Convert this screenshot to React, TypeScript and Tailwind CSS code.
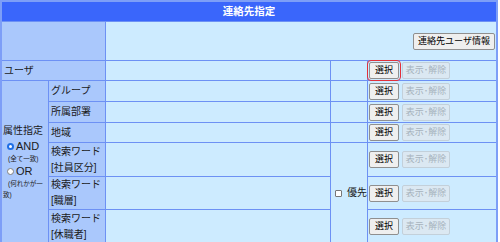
import React from "react";

const btn =
  "h-[17px] flex items-center justify-center rounded-[2px] border border-[#8f8f8f] bg-[#efefef] text-[9px] leading-none text-black";
const dis =
  "h-[17px] w-[48px] flex items-center justify-center rounded-[2px] border border-[#c3d0da] bg-[#dbe8f2] text-[9px] leading-none text-[#a7b3bd]";

function Buttons({ focus }: { focus?: boolean }) {
  return (
    <div className="bg-[#cdebff] flex items-center gap-[3px] pl-[1px]">
      <button
        className={
          btn +
          " w-[30px]" +
          (focus ? " outline-1 outline-solid outline-[#e3303a] outline-offset-[1px]" : "")
        }
      >
        選択
      </button>
      <button className={dis} disabled>
        表示･解除
      </button>
    </div>
  );
}

const L = "bg-[#aac8fc] flex items-center pl-[2px] text-[10px] leading-[16px] text-[#1a1a1a]";
const R = "bg-[#cdebff]";

export default function App() {
  return (
    <div className="w-[500px] h-[242px] overflow-hidden bg-white font-['Liberation_Sans','Noto_Sans_CJK_JP',sans-serif]">
      <div
        className="w-[498px] border-2 border-[#7d9ef7] bg-[#6d91f4] grid gap-px"
        style={{
          gridTemplateColumns: "46px 56px 224px 36px 1fr",
          gridTemplateRows: "19px 38px 19px 20px 20px 19px 33px 32px 33px",
        }}
      >
        {/* header */}
        <div className="col-span-5 bg-[#3a66fb] flex items-center justify-center text-white font-bold text-[10.5px] leading-none">
          連絡先指定
        </div>

        {/* row 1 */}
        <div className="col-span-2 bg-[#aac8fc]" />
        <div className="col-span-3 bg-[#cdebff] flex items-center justify-end pr-[1px]">
          <button className={btn + " w-[82px] px-0"}>連絡先ユーザ情報</button>
        </div>

        {/* user */}
        <div className={"col-span-2 " + L}>ユーザ</div>
        <div className={R} />
        <div className={R} />
        <Buttons focus />

        {/* attribute cell */}
        <div className="row-span-6 bg-[#aac8fc] flex flex-col justify-center pl-[1px] text-[#1a1a1a]">
          <div className="h-[14px] flex items-center text-[10px] leading-none">属性指定</div>
          <div className="h-[16px] flex items-center">
            <span className="ml-[4px] w-[7px] h-[7px] rounded-full bg-[#1f6fe6] flex items-center justify-center">
              <span className="w-[3px] h-[3px] rounded-full bg-white" />
            </span>
            <span className="ml-[2px] text-[11px] leading-none">AND</span>
          </div>
          <div className="h-[11px] flex items-center pl-[5px] text-[6.5px] leading-none">(全て一致)</div>
          <div className="h-[13px] flex items-center">
            <span className="ml-[4px] w-[7px] h-[7px] rounded-full bg-white border border-[#808080]" />
            <span className="ml-[2px] text-[11px] leading-none">OR</span>
          </div>
          <div className="text-[6.5px] leading-[11px] indent-[5px] pr-[2px]">(何れかが一致)</div>
        </div>

        {/* group */}
        <div className={L}>グループ</div>
        <div className={R} />
        <div className={R} />
        <Buttons />

        {/* dept */}
        <div className={L}>所属部署</div>
        <div className={R} />
        <div className={R} />
        <Buttons />

        {/* region */}
        <div className={L}>地域</div>
        <div className={R} />
        <div className={R} />
        <Buttons />

        {/* 社員区分 */}
        <div className={L}>
          <div>
            検索ワード
            <br />
            [社員区分]
          </div>
        </div>
        <div className={R} />
        <div className="row-span-3 bg-[#cdebff] flex items-center pl-[4px]">
          <span className="w-[7px] h-[7px] rounded-[1px] bg-white border border-[#777]" />
          <span className="ml-[5px] text-[10px] leading-none text-[#1a1a1a]">優先</span>
        </div>
        <Buttons />

        {/* 職層 */}
        <div className={L}>
          <div>
            検索ワード
            <br />
            [職層]
          </div>
        </div>
        <div className={R} />
        <Buttons />

        {/* 休職者 */}
        <div className={L}>
          <div>
            検索ワード
            <br />
            [休職者]
          </div>
        </div>
        <div className={R} />
        <Buttons />
      </div>
    </div>
  );
}
